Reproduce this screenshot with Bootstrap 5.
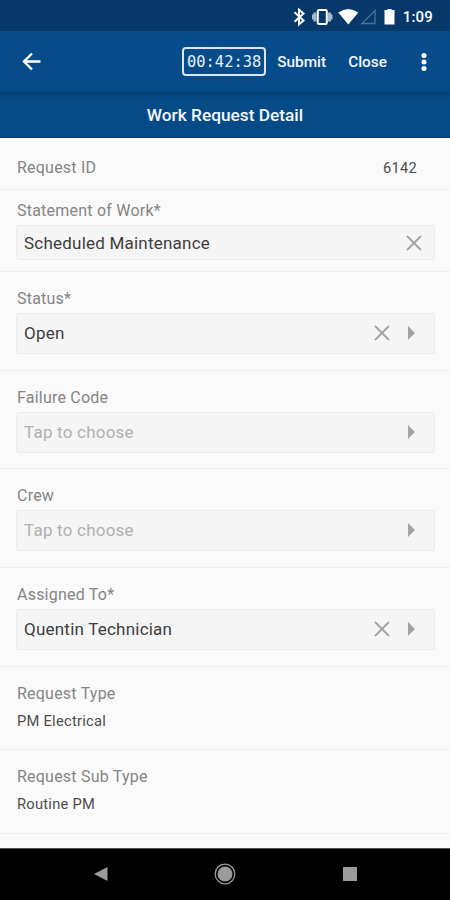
<!DOCTYPE html>
<html lang="en">
<head>
<meta charset="utf-8">
<meta name="viewport" content="width=device-width, initial-scale=1">
<title>Work Request Detail</title>
<link href="https://cdn.jsdelivr.net/npm/bootstrap@5.3.0/dist/css/bootstrap.min.css" rel="stylesheet">
<style>
body { font-family: Roboto, "Liberation Sans", sans-serif; background: #fafafa; height: 900px; overflow: hidden; line-height: 20px; }
svg { display: block; flex: none; }
.status-bar { height: 31px; background: #06386a; padding: 2px 17px 0 0; }
.status-time { font-size: 15px; font-weight: 500; letter-spacing: .2px; margin-left: 7px; }
.app-bar { height: 61px; background: #064b8a; padding: 1px 22px 0 22px; font-size: 15.4px; font-weight: 500; }
.timer { width: 84px; height: 29px; margin-bottom: 2px; border: 2px solid #dce5f5; border-radius: 4px; font: 15.4px/25px "DejaVu Sans Mono", "Liberation Mono", monospace; padding-top: 1px; color: #e9f0fc; }
.bar-action { padding: 0; border: 0; background: none; color: #f4f7ff; font-weight: 500; line-height: 20px; }
.submit-action { margin-left: 11px; margin-right: 22px; }
.menu-icon { margin-left: 19px; }
.title-bar { height: 46px; padding-top: 1px; background: linear-gradient(#07406f 0, #064682 4px, #064a88 7px); border-bottom: 1px solid #053b78; font-size: 17.3px; font-weight: 500; color: #f4f7ff; }
.field-row { border-bottom: 1px solid #efefef; padding: 0 15px 0 17px; }
.h-id { height: 52px; }
.h-text { height: 82px; padding-top: 11px; }
.h-pick { height: 98.7px; padding-top: 17px; }
.h-info { height: 83.5px; padding-top: 17px; }
.field-label { font-size: 16px; line-height: 20px; color: #858585; letter-spacing: .22px; }
.field-value { font-size: 14.7px; color: #4d4d4d; letter-spacing: .25px; }
.id-value { margin-right: 18px; }
.info-value { margin-top: 7px; }
.field-box { height: 41px; margin: 4px 0 0 -1px; padding: 0 18px 1px 7px; background: #f5f5f5; border: 1px solid #ebebeb; border-radius: 3px; font-size: 17px; letter-spacing: .22px; color: #3d3d3d; }
.h-text .field-box { height: 35px; padding-right: 12px; padding-bottom: 0; }
.empty-box { color: #b0b0b0; }
.nav-keys { height: 52px; background: #000; border-top: 1px solid #555; padding-bottom: 2px; }
</style>
</head>
<body class="d-flex flex-column">
<header class="text-white">
  <div class="status-bar d-flex align-items-center justify-content-end">
    <svg width="103" height="22" viewBox="0 0 103 22" fill="#fff">
      <path d="M1.500 6.300 10.500 14.500 6 18.300V3.700L10.500 7.500 1.500 15.700" fill="none" stroke="#fff" stroke-width="2"/>
      <path d="M19 8.500h1.500V6.500h3v9h-3v-2H19zM39.500 8.500H38V6.500h-3v9h3v-2h1.500z" opacity=".65"/>
      <rect x="24.800" y="4" width="9" height="14" rx="1.200" fill="none" stroke="#fff" stroke-width="2"/>
      <path d="M45.300 6.500Q55.300-.500 65.300 6.500L55.300 18.500z"/>
      <path d="M82 4.500V17.500H69z" fill="none" stroke="#4b739d" stroke-width="1.300"/>
      <path d="M94.500 4V3h4v1h3v14.500h-10V4z"/>
    </svg>
    <span class="status-time">1:09</span>
  </div>
  <div class="app-bar d-flex align-items-center">
    <svg width="19" height="20" viewBox="0 0 19 20" fill="none" stroke="#fff" stroke-width="2.400"><path d="M18.500 9.500H2M10 1.500 2 9.500 10 17.500"/></svg>
    <div class="timer text-center ms-auto">00:42:38</div>
    <button class="bar-action submit-action">Submit</button>
    <button class="bar-action">Close</button>
    <svg class="menu-icon ps-2" width="22" height="22" viewBox="0 0 14 22" fill="#fff"><circle cx="10" cy="4.500" r="2.500"/><circle cx="10" cy="11" r="2.500"/><circle cx="10" cy="17.500" r="2.500"/></svg>
  </div>
  <div class="title-bar d-flex align-items-center justify-content-center">Work Request Detail</div>
</header>
<main class="flex-grow-1">
  <div class="field-row h-id d-flex align-items-center justify-content-between pt-2">
    <span class="field-label">Request ID</span><span class="field-value id-value">6142</span>
  </div>
  <div class="field-row h-text">
    <div class="field-label">Statement of Work*</div>
    <div class="field-box d-flex align-items-center justify-content-between">Scheduled Maintenance
      <svg width="16" height="16" viewBox="0 0 16 16" stroke="#a3a3a3" stroke-width="1.800"><path d="M1 1 15 15M15 1 1 15"/></svg>
    </div>
  </div>
  <div class="field-row h-pick">
    <div class="field-label">Status*</div>
    <div class="field-box d-flex align-items-center">Open
      <svg class="ms-auto" width="16" height="16" viewBox="0 0 16 16" stroke="#a3a3a3" stroke-width="1.800"><path d="M1 1 15 15M15 1 1 15"/></svg>
      <svg class="ms-3" width="10" height="14" viewBox="0 0 10 14" fill="#a3a3a3"><path d="M2 0 9 7 2 14z"/></svg>
    </div>
  </div>
  <div class="field-row h-pick">
    <div class="field-label">Failure Code</div>
    <div class="field-box empty-box d-flex align-items-center justify-content-between">Tap to choose
      <svg width="10" height="14" viewBox="0 0 10 14" fill="#a3a3a3"><path d="M2 0 9 7 2 14z"/></svg>
    </div>
  </div>
  <div class="field-row h-pick">
    <div class="field-label">Crew</div>
    <div class="field-box empty-box d-flex align-items-center justify-content-between">Tap to choose
      <svg width="10" height="14" viewBox="0 0 10 14" fill="#a3a3a3"><path d="M2 0 9 7 2 14z"/></svg>
    </div>
  </div>
  <div class="field-row h-pick">
    <div class="field-label">Assigned To*</div>
    <div class="field-box d-flex align-items-center">Quentin Technician
      <svg class="ms-auto" width="16" height="16" viewBox="0 0 16 16" stroke="#a3a3a3" stroke-width="1.800"><path d="M1 1 15 15M15 1 1 15"/></svg>
      <svg class="ms-3" width="10" height="14" viewBox="0 0 10 14" fill="#a3a3a3"><path d="M2 0 9 7 2 14z"/></svg>
    </div>
  </div>
  <div class="field-row h-info">
    <div class="field-label">Request Type</div>
    <div class="field-value info-value">PM Electrical</div>
  </div>
  <div class="field-row h-info">
    <div class="field-label">Request Sub Type</div>
    <div class="field-value info-value">Routine PM</div>
  </div>
</main>
<footer class="nav-keys d-flex align-items-center justify-content-center">
  <svg width="270" height="24" viewBox="0 0 270 24" fill="#9b9b9b">
    <path d="M4 12 17.500 5v14z"/>
    <circle cx="135" cy="12" r="7.500"/><circle cx="135" cy="12" r="9.800" fill="none" stroke="#9b9b9b" stroke-width="1.300"/>
    <path d="M253 5h14v14h-14z"/>
  </svg>
</footer>
<script src="https://cdn.jsdelivr.net/npm/bootstrap@5.3.0/dist/js/bootstrap.bundle.min.js"></script>
</body>
</html>
